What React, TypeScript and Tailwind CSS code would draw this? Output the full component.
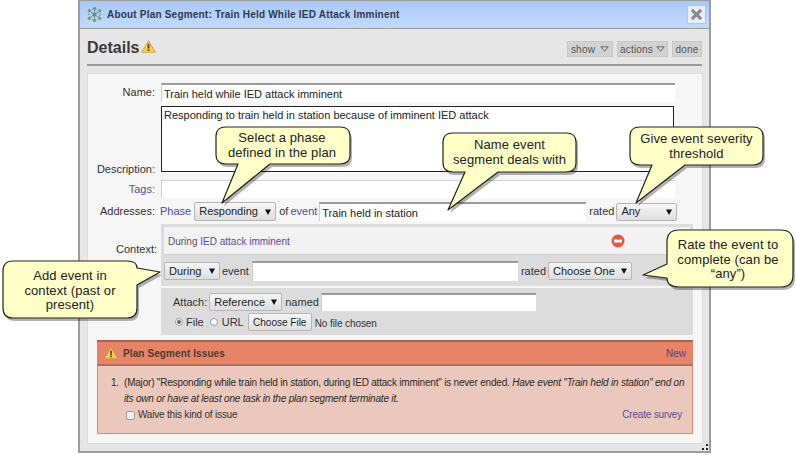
const font = "font-['Liberation_Sans',Arial,sans-serif]";

function Warning({ className }: { className: string }) {
  return (
    <svg viewBox="0 0 16 14" className={className}>
      <path d="M8 .8 15.4 13.2H.6Z" fill="#f6d04d" stroke="#c9a441" strokeWidth="1" strokeLinejoin="round" />
      <rect x="7.1" y="4.2" width="1.8" height="5" fill="#4a3b1a" />
      <rect x="7.1" y="10" width="1.8" height="1.8" fill="#4a3b1a" />
    </svg>
  );
}

function Caret() {
  return (
    <svg viewBox="0 0 6 6" className="h-[6px] w-[6px] shrink-0">
      <path d="M0 .5h6L3 6Z" fill="#111" />
    </svg>
  );
}

function OpenCaret() {
  return (
    <svg viewBox="0 0 9 6" className="h-[6px] w-[9px] shrink-0">
      <path d="M.8 .8h7.4L4.5 5.2Z" fill="none" stroke="#666" strokeWidth="1" />
    </svg>
  );
}

function Select({ label, className }: { label: string; className: string }) {
  return (
    <div className={`flex shrink-0 items-center justify-between rounded-[2px] border border-[#b5b5b5] bg-gradient-to-b from-[#f6f6f6] to-[#dedede] pl-[4px] pr-[4px] text-[11px] text-[#222] ${className}`}>
      <span>{label}</span>
      <Caret />
    </div>
  );
}

function Field({ value, className }: { value?: string; className: string }) {
  return (
    <input
      readOnly
      value={value ?? ""}
      className={`shrink-0 border-t-2 border-l border-[#9a9a9a] border-l-[#cfcfcf] bg-white pl-[2px] text-[11px] text-[#222] outline-none ${className}`}
    />
  );
}

function HeaderButton({ children, className }: { children: React.ReactNode; className: string }) {
  return (
    <div className={`flex h-[16px] items-center justify-center gap-[5px] border border-[#c6c6c6] bg-[#d2d2d2] text-[10px] tracking-[0.2px] text-[#555] ${className}`}>
      {children}
    </div>
  );
}

const shapes = [
  "M226 127H340Q350 127 350 136V155Q350 164 340 164H270L222 203L238 164H226Q216 164 216 155V136Q216 127 226 127Z",
  "M453 133H566Q576 133 576 142V163Q576 172 566 172H498L448 210L465 172H453Q443 172 443 163V142Q443 133 453 133Z",
  "M640 127H753Q763 127 763 136V156Q763 165 753 165H685L636 203L652 165H640Q630 165 630 156V136Q630 127 640 127Z",
  "M13 261H127Q137 261 137 268L160 272L137 285V308Q137 318 127 318H13Q3 318 3 308V271Q3 261 13 261Z",
  "M679 230H781Q793 230 793 242V275Q793 287 781 287H679Q667 287 667 278L643 275L667 264V242Q667 230 679 230Z",
];

const calloutText = "absolute text-center text-[13px] leading-[14.5px] tracking-[0.1px] text-[#222]";

function Callouts() {
  return (
    <>
      <svg viewBox="0 0 796 455" className="pointer-events-none absolute left-0 top-0 h-[455px] w-[796px]">
        {shapes.map((d) => (
          <path key={d} d={d} fill="#000" opacity="0.3" transform="translate(2 3)" />
        ))}
        {shapes.map((d) => (
          <path key={d} d={d} fill="#ffffc8" stroke="#222" strokeWidth="1.2" strokeLinejoin="round" />
        ))}
      </svg>
      <div className={`${calloutText} left-[215px] top-[131px] w-[134px]`}>Select a phase<br />defined in the plan</div>
      <div className={`${calloutText} left-[443px] top-[138px] w-[133px]`}>Name event<br />segment deals with</div>
      <div className={`${calloutText} left-[630px] top-[132px] w-[133px]`}>Give event severity<br />threshold</div>
      <div className={`${calloutText} left-[3px] top-[269px] w-[134px]`}>Add event in<br />context (past or<br />present)</div>
      <div className={`${calloutText} left-[665px] top-[238px] w-[126px]`}>Rate the event to<br />complete (can be<br />“any”)</div>
    </>
  );
}

export default function App() {
  return (
    <div className={`relative h-[455px] w-[796px] overflow-hidden bg-white ${font}`}>
      <div className="ml-[78px] flex h-[453px] w-[633px] flex-col border-2 border-t border-[#9c9c9c] bg-[#e6e6e6]">
        {/* Title bar */}
        <div className="flex h-[28px] shrink-0 items-center border-b border-[#9a9a9a] bg-gradient-to-b from-[#a9c8f6] to-[#c3dafc] pl-[6px] pr-[3px]">
          <svg viewBox="0 0 18 18" className="h-[17px] w-[17px]">
            <g fill="none" stroke="#5f8f6d" strokeWidth="1">
              <circle cx="9" cy="9" r="6" strokeDasharray="2 1.5" />
              <path d="M3 5 15 13M15 5 3 13M9 2V16" />
            </g>
            <circle cx="9" cy="9" r="2" fill="#6a7fb8" />
            <circle cx="3.5" cy="5" r="1.7" fill="#6aa56a" />
            <circle cx="14.5" cy="5" r="1.7" fill="#6aa56a" />
            <circle cx="3.5" cy="13" r="1.7" fill="#6aa56a" />
            <circle cx="14.5" cy="13" r="1.7" fill="#6aa56a" />
            <circle cx="9" cy="2.5" r="1.5" fill="#8a78b5" />
            <circle cx="9" cy="15.5" r="1.5" fill="#8a78b5" />
          </svg>
          <span className="ml-[4px] text-[10px] font-bold tracking-[0.2px] text-[#2e3a4d]">About Plan Segment: Train Held While IED Attack Imminent</span>
          <div className="ml-auto flex h-[19px] w-[19px] items-center justify-center border border-[#b9c4d6] bg-[#e9eef6]">
            <svg viewBox="0 0 14 14" className="h-[13px] w-[13px]">
              <path d="M2 2 12 12M12 2 2 12" stroke="#8a8a8a" strokeWidth="3.4" />
            </svg>
          </div>
        </div>

        <div className="flex min-h-0 flex-1 flex-col px-[7px]">
          {/* Details header */}
          <div className="flex h-[37px] shrink-0 items-end justify-between border-b-2 border-[#9a9a9a] pb-[7px]">
            <div className="flex items-center gap-[2px]">
              <span className="text-[16px] font-bold leading-[18px] text-[#3a3a3a]">Details</span>
              <Warning className="mb-[3px] h-[13px] w-[15px]" />
            </div>
            <div className="flex gap-[4px]">
              <HeaderButton className="w-[46px]">show <OpenCaret /></HeaderButton>
              <HeaderButton className="w-[51px] !gap-[3px]">actions <OpenCaret /></HeaderButton>
              <HeaderButton className="w-[30px]">done</HeaderButton>
            </div>
          </div>

          {/* Form panel */}
          <div className="mt-[7px] h-[371px] w-[616px] shrink-0 border border-[#dddddd] bg-[#f6f6f6] pt-[9px] text-[11px] text-[#333]">
            <div className="flex h-[19px] items-center">
              <span className="w-[67px] text-right">Name:</span>
              <Field value="Train held while IED attack imminent" className="ml-[6px] h-[19px] w-[514px]" />
            </div>
            <div className="mt-[4px] flex items-end">
              <span className="-mb-[4px] w-[67px] text-right leading-[13px]">Description:</span>
              <div className="ml-[6px] h-[66px] w-[513px] border border-[#222] bg-white pl-[2px] pt-[2px] leading-[13px] text-[#222]">
                Responding to train held in station because of imminent IED attack
              </div>
            </div>
            <div className="mt-[8px] flex h-[18px] items-center">
              <span className="w-[67px] text-right text-[#5b4a9c]">Tags:</span>
              <Field className="ml-[6px] h-[18px] w-[514px] !border-t !border-[#cfcfcf]" />
            </div>
            <div className="mt-[4px] flex h-[19px] items-center">
              <span className="w-[67px] text-right">Addresses:</span>
              <span className="ml-[5px] text-[#4f4aa0]">Phase</span>
              <Select label="Responding" className="ml-[3px] h-[19px] w-[82px]" />
              <span className="ml-[3px]">of</span>
              <span className="ml-[2px] text-[#4f4aa0]">event</span>
              <Field value="Train held in station" className="ml-[2px] h-[19px] w-[267px]" />
              <span className="ml-[3px]">rated</span>
              <Select label="Any" className="ml-[2px] h-[18px] w-[61px]" />
            </div>

            {/* Context */}
            <div className="mt-[3px] flex">
              <span className="mt-[17px] w-[69px] text-right">Context:</span>
              <div className="ml-[4px] w-[532px]">
                <div className="bg-[#dcdcdc] px-[3px] pt-[3px]">
                  <div className="flex h-[28px] items-center justify-between border-b border-[#d0d0d0] bg-[#f2f2f2] pl-[4px] pr-[65px] text-[10px] text-[#5b4a9c]">
                    <span className="mt-[2px]"><span className="text-[#555]">During</span> IED attack imminent</span>
                    <svg viewBox="0 0 14 14" className="h-[14px] w-[14px]">
                      <circle cx="7" cy="7" r="6.5" fill="#e8573f" />
                      <rect x="3" y="5.5" width="8" height="3" fill="#fff" />
                    </svg>
                  </div>
                </div>
                <div className="flex h-[31px] items-center bg-[#dcdcdc] pl-[3px] pt-[1px]">
                  <Select label="During" className="h-[18px] w-[56px]" />
                  <span className="ml-[2px]">event</span>
                  <Field className="ml-[3px] h-[20px] w-[266px]" />
                  <span className="ml-[3px]">rated</span>
                  <Select label="Choose One" className="ml-[2px] h-[18px] w-[84px]" />
                </div>
                <div className="mt-[2px] h-[47px] bg-[#dcdcdc] pl-[12px] pt-[5px]">
                  <div className="flex h-[18px] items-center">
                    <span>Attach:</span>
                    <Select label="Reference" className="ml-[2px] h-[18px] w-[73px]" />
                    <span className="ml-[3px]">named</span>
                    <Field className="ml-[2px] h-[18px] w-[215px]" />
                  </div>
                  <div className="mt-[2px] flex h-[18px] items-center">
                    <span className="ml-[2px] flex h-[8px] w-[8px] items-center justify-center rounded-full border border-[#999] bg-white">
                      <span className="h-[4px] w-[4px] rounded-full bg-[#666]" />
                    </span>
                    <span className="ml-[3px]">File</span>
                    <span className="ml-[6px] h-[8px] w-[8px] rounded-full border border-[#999] bg-white" />
                    <span className="ml-[4px]">URL</span>
                    <div className="ml-[4px] flex h-[18px] w-[64px] items-center justify-center rounded-[2px] border border-[#b5b5b5] bg-gradient-to-b from-[#f6f6f6] to-[#dedede] text-[10px] text-[#222]">Choose File</div>
                    <span className="ml-[3px] mt-[2px] text-[10px] tracking-[-0.1px] text-[#333]">No file chosen</span>
                  </div>
                </div>
              </div>
            </div>

            {/* Issues */}
            <div className="ml-[9px] mt-[5px] h-[94px] w-[596px] border-x border-b border-[#dd8570] bg-[#ebc8bb]">
              <div className="-mx-px flex h-[26px] items-center justify-between border-y-2 border-t-[#a9634f] border-b-[#b0705c] bg-[#e78467] pl-[7px] pr-[7px]">
                <div className="flex items-center gap-[5px]">
                  <Warning className="h-[12px] w-[14px]" />
                  <span className="text-[10px] font-bold tracking-[0.1px] text-[#4d3b35]">Plan Segment Issues</span>
                </div>
                <span className="text-[10px] text-[#5a3a8c]">New</span>
              </div>
              <div className="relative pl-[26px] pr-[10px] pt-[9px] text-[10px] leading-[16px] tracking-[-0.2px] text-[#2a2a2a]">
                <span className="absolute left-[13px]">1.</span>
                <div className="whitespace-nowrap">
                  (Major) "Responding while train held in station, during IED attack imminent" is never ended. <i>Have event "Train held in station" end on</i>
                </div>
                <div className="whitespace-nowrap"><i>its own or have at least one task in the plan segment terminate it.</i></div>
                <div className="flex items-center justify-between text-[#333]">
                  <div className="flex items-center">
                    <span className="ml-[2px] h-[9px] w-[9px] rounded-[2px] border border-[#999] bg-[#eee]" />
                    <span className="ml-[3px]">Waive this kind of issue</span>
                  </div>
                  <span className="text-[#5b4a9c]">Create survey</span>
                </div>
              </div>
            </div>
          </div>
        </div>
      </div>

      {/* Resize grip */}
      <svg viewBox="0 0 7 7" className="absolute left-[702px] top-[444px] h-[7px] w-[7px]">
        <path d="M4 0h2v2H4ZM0 4h2v2H0ZM4 4h2v2H4Z" fill="#222" />
      </svg>

      <Callouts />
    </div>
  );
}
